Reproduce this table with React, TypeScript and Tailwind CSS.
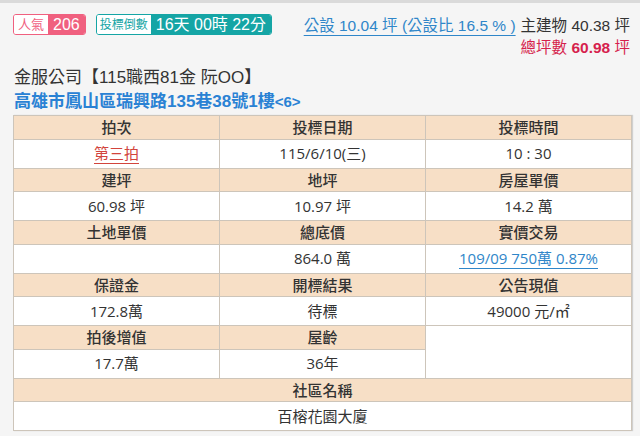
import React from "react";

const sans = { fontFamily: '"Liberation Sans", "Noto Sans CJK TC", sans-serif' };

interface Cell {
  label: string;
  value: React.ReactNode;
}

const rows: Cell[][] = [
  [
    {
      label: "拍次",
      value: <span className="text-[#d2443c] underline underline-offset-4 decoration-[#d2443c]">第三拍</span>,
    },
    { label: "投標日期", value: "115/6/10(三)" },
    { label: "投標時間", value: "10 : 30" },
  ],
  [
    { label: "建坪", value: "60.98 坪" },
    { label: "地坪", value: "10.97 坪" },
    { label: "房屋單價", value: "14.2 萬" },
  ],
  [
    { label: "土地單價", value: "" },
    { label: "總底價", value: "864.0 萬" },
    {
      label: "實價交易",
      value: <span className="text-[#2f86c9] underline underline-offset-4 decoration-[#2f86c9]">109/09 750萬 0.87%</span>,
    },
  ],
  [
    { label: "保證金", value: "172.8萬" },
    { label: "開標結果", value: "待標" },
    { label: "公告現值", value: "49000 元/㎡" },
  ],
];

const th = "h-[23px] border border-[#cdc5ba] bg-[#f7dfc6] text-center font-medium p-0";
const td = "h-[29px] border border-[#cdc5ba] bg-white text-center p-0";

export default function App() {
  return (
    <div className="min-h-[436px] w-[640px] bg-[#f5f5f5] border-t-[3px] border-[#dadada]" style={sans}>
      {/* top bar */}
      <div className="flex items-start justify-between pl-[13px] pr-[10px] pt-[11px]">
        <div className="flex items-center gap-[10px]">
          <div className="flex h-[21px] items-stretch overflow-hidden rounded-[3px] border border-[#f0607f]">
            <span className="flex items-center bg-white px-[4px] text-[13px] text-[#f0607f]">人氣</span>
            <span className="flex items-center bg-[#f0607f] px-[5px] text-[16px] text-white">206</span>
          </div>
          <div className="flex h-[21px] items-stretch overflow-hidden rounded-[3px] border border-[#15a5a5]">
            <span className="flex items-center bg-white px-[3px] text-[12px] text-[#15a5a5]">投標倒數</span>
            <span className="flex items-center bg-[#15a5a5] px-[5px] text-[16px] text-white">16天 00時 22分</span>
          </div>
        </div>
        <div className="flex flex-col items-end pt-[1px]">
          <div className="flex items-center gap-[5px] text-[15.5px] leading-[22px]">
            <span className="text-[#2f86c9] underline underline-offset-4 decoration-[#2f86c9]">
              公設 10.04 坪 (公設比 16.5 % )
            </span>
            <span className="text-[#333]">主建物 40.38 坪</span>
          </div>
          <div className="text-[15.5px] leading-[22px] text-[#d61f4d]">
            總坪數 <span className="font-bold">60.98</span> 坪
          </div>
        </div>
      </div>

      {/* title */}
      <div className="pl-[14px] pt-[7px]">
        <div className="text-[17px] leading-[24px] text-[#333]">金服公司【115職西81金 阮OO】</div>
        <div className="text-[17px] leading-[24px] font-bold text-[#2a82d4]">
          高雄市鳳山區瑞興路135巷38號1樓<span className="text-[15px]">&lt;6&gt;</span>
        </div>
      </div>

      {/* table */}
      <div className="ml-[13px] mt-[1px] w-[619px] shadow-[1px_0_1px_rgba(0,0,0,0.15)]">
        <table
          className="w-full table-fixed border-collapse text-[15px] text-[#333]"
          style={{ fontFamily: '"Open Sans", "Noto Sans CJK TC", sans-serif' }}
        >
          <tbody>
            {rows.map((r, i) => (
              <React.Fragment key={i}>
                <tr>
                  {r.map((c) => (
                    <td key={c.label} className={th}>
                      {c.label}
                    </td>
                  ))}
                </tr>
                <tr>
                  {r.map((c) => (
                    <td key={c.label} className={td}>
                      {c.value}
                    </td>
                  ))}
                </tr>
              </React.Fragment>
            ))}
            <tr>
              <td className={th}>拍後增值</td>
              <td className={th}>屋齡</td>
              <td rowSpan={2} className="border border-[#cdc5ba] bg-white p-0"></td>
            </tr>
            <tr>
              <td className={td}>17.7萬</td>
              <td className={td}>36年</td>
            </tr>
            <tr>
              <td colSpan={3} className={th}>
                社區名稱
              </td>
            </tr>
            <tr>
              <td colSpan={3} className={td}>
                百榕花園大廈
              </td>
            </tr>
          </tbody>
        </table>
      </div>
    </div>
  );
}
